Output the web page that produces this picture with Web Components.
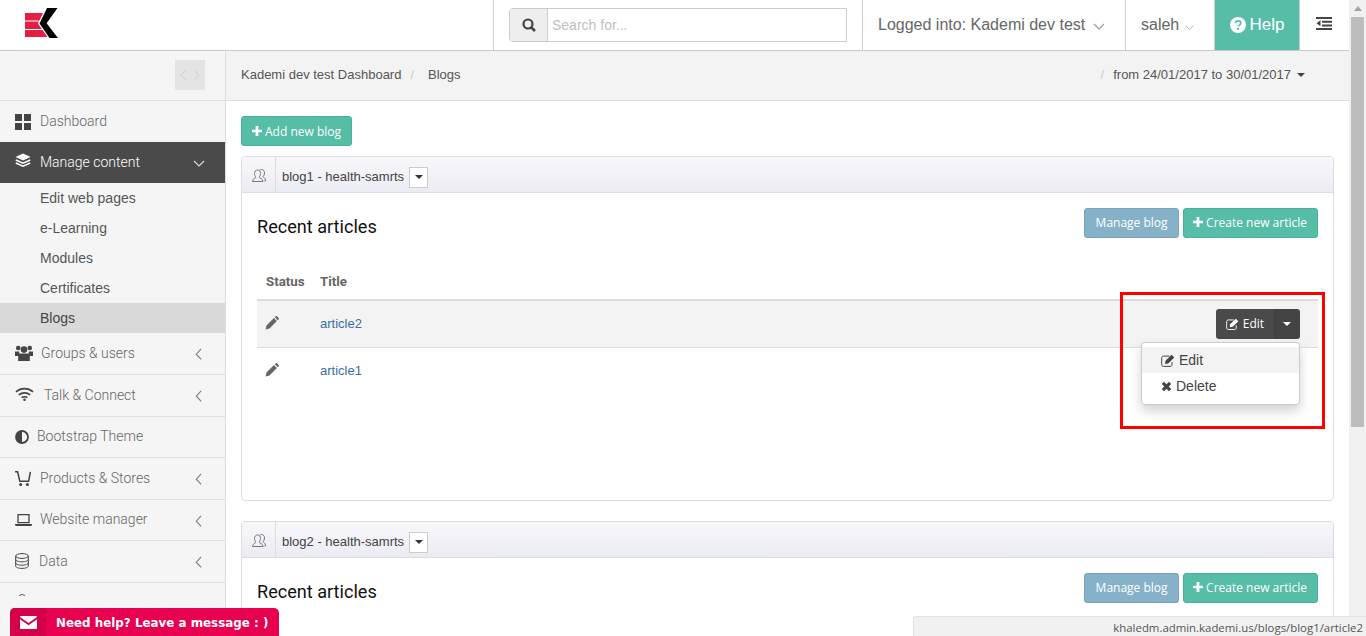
<!DOCTYPE html>
<html lang="en">
<head>
<meta charset="utf-8">
<title>Blogs</title>
<style>
  html, body { margin: 0; height: 100%; overflow: hidden; background: #fff; }
  body { font: 14px "Liberation Sans", Arial, sans-serif; color: #555; }
</style>
</head>
<body>
<kd-app>
  <kd-topbar slot="top"></kd-topbar>
  <kd-sidebar slot="side">
    <kd-nav-item icon="dashboard" gap="9">Dashboard</kd-nav-item>
    <kd-nav-item icon="layers" gap="9" lift="3" active chevron="down">Manage content</kd-nav-item>
    <kd-sub-item>Edit web pages</kd-sub-item>
    <kd-sub-item>e-Learning</kd-sub-item>
    <kd-sub-item>Modules</kd-sub-item>
    <kd-sub-item>Certificates</kd-sub-item>
    <kd-sub-item current>Blogs</kd-sub-item>
    <kd-nav-item icon="group" gap="8" lift="1" chevron="left" h="42">Groups &amp; users</kd-nav-item>
    <kd-nav-item icon="wifi" gap="10" lift="2" chevron="left" h="42">Talk &amp; Connect</kd-nav-item>
    <kd-nav-item icon="adjust" gap="8" h="41">Bootstrap Theme</kd-nav-item>
    <kd-nav-item icon="cart" gap="9" chevron="left" h="42">Products &amp; Stores</kd-nav-item>
    <kd-nav-item icon="laptop" gap="8" chevron="left" h="41">Website manager</kd-nav-item>
    <kd-nav-item icon="database" gap="10" lift="1" chevron="left" h="42">Data</kd-nav-item>
    <kd-nav-stub></kd-nav-stub>
  </kd-sidebar>
  <kd-breadcrumb slot="main"></kd-breadcrumb>
  <kd-page slot="main">
    <kd-button color="green" icon="plus">Add new blog</kd-button>
    <kd-blog-panel name="blog1 - health-samrts" tall>
      <kd-article-table>
        <kd-article-row title-text="article2" highlight open></kd-article-row>
        <kd-article-row title-text="article1"></kd-article-row>
      </kd-article-table>
    </kd-blog-panel>
    <kd-blog-panel name="blog2 - health-samrts"></kd-blog-panel>
  </kd-page>
</kd-app>

<script>
const ICONS = {
  dashboard: [16, 16, 'M0 0h7v7H0zM9 0h7v7H9zM0 9h7v7H0zM9 9h7v7H9z'],
  layers: [16, 14, '<path d="M8 .6 15.6 4 8 7.4.4 4z" fill="currentColor"/><path d="M.8 7 8 10.2 15.2 7M.8 10 8 13.2 15.2 10" fill="none" stroke="currentColor" stroke-width="1.5"/>'],
  group: [18, 16, '<circle cx="3.2" cy="3" r="2.3"/><circle cx="14.8" cy="3" r="2.3"/><circle cx="9" cy="4.6" r="3.3"/><path d="M0 6.4h4.3L4 11H0zM13.7 6.4H18V11h-4zM4.8 8.6h8.4c.9 0 1.6.8 1.6 1.8V16H3.2v-5.600c0-1 .7-1.800 1.600-1.800z"/>'],
  wifi: [19, 14, '<path d="M1 4.800C5.800.6 13.200.6 18 4.800M3.800 7.800c3.200-2.700 8.200-2.700 11.400 0M6.600 10.600c1.500-1.100 4.300-1.100 5.800 0" fill="none" stroke="currentColor" stroke-width="1.700"/><circle cx="9.500" cy="12.700" r="1.300" fill="currentColor"/>'],
  adjust: [14, 14, '<circle cx="7" cy="7" r="6" fill="none" stroke="currentColor" stroke-width="1.800"/><path d="M7 1a6 6 0 0 0 0 12z" fill="currentColor"/>'],
  cart: [16, 15, '<path d="M0 .8h2.600l2.200 9.400h8.800L15.400 1" fill="none" stroke="currentColor" stroke-width="1.500"/><circle cx="5.600" cy="13.400" r="1.500" fill="currentColor"/><circle cx="12.400" cy="13.400" r="1.500" fill="currentColor"/>'],
  laptop: [17, 12, '<path d="M3 .7h11v8H3z" fill="none" stroke="currentColor" stroke-width="1.300"/><path d="M0 10h17v1.200l-1 .8H1l-1-.8z" fill="currentColor"/>'],
  database: [14, 16, '<g fill="none" stroke="currentColor" stroke-width="1"><ellipse cx="7" cy="3" rx="6.300" ry="2.400"/><path d="M.7 3v10c0 1.400 2.800 2.400 6.300 2.400s6.300-1 6.300-2.400V3M.7 6.400c0 1.400 2.800 2.400 6.300 2.400s6.300-1 6.300-2.400M.7 9.800c0 1.400 2.800 2.400 6.300 2.400s6.300-1 6.300-2.400"/></g>'],
  search: [14, 14, '<circle cx="6" cy="6" r="4.500" fill="none" stroke="currentColor" stroke-width="2.200"/><path d="m9.300 9.300 3.700 3.700" stroke="currentColor" stroke-width="2.600"/>'],
  pencil: [14, 14, 'M.6 13.400l.9-3.900 7.400-7.400 3 3-7.400 7.400zM9.800 1.200 10.800.3c.4-.3.900-.3 1.200 0l1.700 1.700c.3.300.3.800 0 1.200l-1 1z'],
  edit: [14, 13, '<path d="M11 8v2.700c0 1-.7 1.700-1.700 1.700H2.400C1.400 12.400.7 11.700.7 10.700V3.800c0-1 .7-1.700 1.700-1.700h6" fill="none" stroke="currentColor" stroke-width="1"/><path d="M4.500 6.800 10.600 .7l2.700 2.700-6.100 6.100-3.200.5z" fill="currentColor"/>'],
  times: [11, 11, 'M3 .8 5.500 3.300 8 .8 10.200 3 7.700 5.500 10.200 8 8 10.200 5.500 7.700 3 10.200.8 8 3.300 5.500.8 3z'],
  plus: [11, 11, 'M4 0h3v4h4v3H7v4H4V7H0V4h4z'],
  users: [14, 13, '<g fill="none" stroke="currentColor" stroke-width="1"><path d="M5.500 1C7.500 1 8.500 2.600 8.500 4.500 8.500 6 7.800 7.400 7 8c0 1 4 1.500 4 4.500H.5C.5 9.500 4 9 4 8 3.200 7.400 2.500 6 2.500 4.500 2.500 2.600 3.500 1 5.500 1z"/><path d="M7.500 1.200C8.200.7 9 .5 9.500.5c2 0 3 1.600 3 3.500 0 1.500-.7 2.900-1.500 3.500 0 1 2.500 1 2.500 4.500h-1"/></g>'],
  envelope: [17, 13, 'M1.200 0h14.600c.7 0 1.200.5 1.200 1.100L8.500 7 0 1.100C0 .5.500 0 1.200 0zM0 3.300 8.500 9.200 17 3.300v8.400c0 .7-.5 1.300-1.200 1.300H1.200C.5 13 0 12.400 0 11.700z'],
  indent: [16, 13, 'M0 0h16v2H0zM6 3.700h10v2H6zM6 7.400h10v2H6zM0 11h16v2H0zM4.500 3.200v6L.5 6.200z'],
  help: [16, 16, '<circle cx="8" cy="8" r="8" fill="currentColor"/><path d="M5.300 6.200c.2-1.500 1.300-2.300 2.800-2.300 1.600 0 2.700.9 2.700 2.200 0 1-.6 1.500-1.300 2-.6.400-.9.700-.9 1.400" fill="none" stroke="#56bda6" stroke-width="1.700"/><rect x="7" y="10.800" width="2" height="2" fill="#56bda6"/>'],
  'chev-left': [8, 14, '<path d="M7 1 1.500 7 7 13" fill="none" stroke="currentColor" stroke-width="1.200"/>'],
  'chev-right': [8, 14, '<path d="M1 1l5.500 6L1 13" fill="none" stroke="currentColor" stroke-width="1.200"/>'],
  'chev-down': [12, 7, '<path d="M1 1l5 5 5-5" fill="none" stroke="currentColor" stroke-width="1.100"/>'],
  caret: [8, 4, 'M0 0h8L4 4z']
};

class KdIcon extends HTMLElement {
  connectedCallback() {
    const [w, h, body] = ICONS[this.getAttribute('name')];
    const size = this.getAttribute('size');
    const inner = body.startsWith('<') ? body : `<path d="${body}"/>`;
    const scale = size ? size / w : 1;
    this.attachShadow({mode: 'open'}).innerHTML = `
      <style>:host { display: inline-flex; flex: none; line-height: 0; } svg { display: block; fill: currentColor; }</style>
      <svg width="${w * scale}" height="${h * scale}" viewBox="0 0 ${w} ${h}">${inner}</svg>`;
  }
}

class KdApp extends HTMLElement {
  constructor() {
    super();
    this.attachShadow({mode: 'open'}).innerHTML = `
      <style>
        :host { display: grid; grid-template-columns: 1349px 17px; height: 636px; position: relative; overflow: hidden; }
        .shell { display: flex; flex-direction: column; min-width: 0; height: 636px; }
        .below { display: flex; flex: 1; min-height: 0; }
        .main { flex: 1; min-width: 0; display: flex; flex-direction: column; overflow: hidden; }
        .bar { background: #f1f1f1; display: flex; flex-direction: column; align-items: stretch; }
        .arrow { height: 17px; display: flex; align-items: center; justify-content: center; color: #a3a3a3; }
        .arrow i { border: 4px solid transparent; border-top: 0; border-bottom: 5px solid currentColor; }
        .thumb { height: 410px; background: #bdbdbd; margin: 0 2px 0 2px; }
        .annot { position: absolute; left: 1120px; top: 292px; width: 199px; height: 131px; border: 3px solid #f00; pointer-events: none; z-index: 5; }
        .status { position: absolute; right: 0; bottom: 0; width: 449px; height: 19px; padding-right: 3px; background: #f1f1f1; border-top: 1px solid #e2e2e2; border-left: 1px solid #e2e2e2; border-top-left-radius: 3px; font: 11.400px/21px "Open Sans", sans-serif; color: #555; text-align: right; z-index: 6; }
        .chat { position: absolute; left: 10px; bottom: 0; width: 269px; height: 28px; display: flex; background: #e6004f; border-radius: 5px 5px 0 0; overflow: hidden; color: #fff; z-index: 6; font: bold 11.900px/30px "DejaVu Sans", sans-serif; }
        .chat .env { width: 36px; background: #d4004a; display: flex; align-items: center; justify-content: center; }
        .chat span { margin-left: 10px; white-space: nowrap; }
      </style>
      <div class="shell">
        <slot name="top"></slot>
        <div class="below">
          <slot name="side"></slot>
          <div class="main"><slot name="main"></slot></div>
        </div>
      </div>
      <div class="bar"><div class="arrow"><i></i></div><div class="thumb"></div></div>
      <div class="annot"></div>
      <div class="status">khaledm.admin.kademi.us/blogs/blog1/article2</div>
      <div class="chat"><div class="env"><kd-icon name="envelope"></kd-icon></div><span>Need help? Leave a message : )</span></div>`;
  }
}

class KdTopbar extends HTMLElement {
  constructor() {
    super();
    this.attachShadow({mode: 'open'}).innerHTML = `
      <style>
        :host { display: flex; height: 50px; border-bottom: 1px solid #c9c9d1; background: #fff; font-size: 16px; color: #666; flex: none; }
        .cell { display: flex; flex: none; align-items: center; border-right: 1px solid #ccc; box-sizing: border-box; height: 50px; }
        .logo { width: 494px; padding-left: 25px; }
        .logo svg { margin-top: -3px; }
        .search { width: 369px; padding-left: 15px; }
        .group { display: flex; width: 338px; height: 34px; box-sizing: border-box; border: 1px solid #ccc; border-radius: 4px 0 0 4px; }
        .addon { width: 37px; background: #eee; border-right: 1px solid #ccc; display: flex; align-items: center; justify-content: center; color: #444; border-radius: 3px 0 0 3px; }
        .ph { padding-left: 4px; font-size: 14px; line-height: 32px; color: #c0c0c0; }
        .logged { width: 263px; padding-left: 15px; }
        .user { width: 89px; padding-left: 15px; }
        .help { width: 84px; justify-content: center; gap: 4px; background: #56bda6; color: #fff; font-size: 17px; border-right: 0; }
        .menu { width: 50px; justify-content: flex-end; padding-right: 17px; border: 0; color: #444; border-left: 1px solid #ccc; }
        .menu kd-icon { margin-top: -4px; }
        .chev { margin-left: 8px; color: #999; }
        .user .chev { margin-left: 6px; color: #aaa; }
      </style>
      <div class="cell logo">
        <svg width="34" height="31" viewBox="0 0 34 31">
          <path fill="#e21f45" d="M0 5h18l-3.500 7.500H0zM0 13.500h14l-1 2 3.800 5.500H0zM0 22h17.500l5 7H0z"/>
          <path fill="#000" d="M22 0h10.500L21.600 15.200 33 30h-8.500L14.500 15.500z"/>
        </svg>
      </div>
      <div class="cell search">
        <div class="group"><div class="addon"><kd-icon name="search"></kd-icon></div><div class="ph">Search for...</div></div>
      </div>
      <div class="cell logged">Logged into: Kademi dev test<span class="chev"><kd-icon name="chev-down"></kd-icon></span></div>
      <div class="cell user">saleh<span class="chev"><kd-icon name="chev-down" size="9"></kd-icon></span></div>
      <div class="cell help"><kd-icon name="help"></kd-icon>Help</div>
      <div class="cell menu"><kd-icon name="indent"></kd-icon></div>`;
  }
}

class KdSidebar extends HTMLElement {
  constructor() {
    super();
    this.attachShadow({mode: 'open'}).innerHTML = `
      <style>
        :host { display: block; flex: none; width: 226px; box-sizing: border-box; background: #f5f5f5; border-right: 1px solid #dcdcdc; overflow: hidden; }
        .toggle { height: 50px; box-sizing: border-box; border-bottom: 1px solid #ddd; padding-bottom: 1px; display: flex; justify-content: flex-end; align-items: center; padding-right: 20px; }
        .box { width: 30px; height: 30px; background: #e4e4e4; display: flex; align-items: center; justify-content: center; gap: 8px; color: #c8c8c8; }
      </style>
      <div class="toggle"><div class="box"><kd-icon name="chev-left" size="6"></kd-icon><kd-icon name="chev-right" size="6"></kd-icon></div></div>
      <slot></slot>`;
  }
}

class KdNavItem extends HTMLElement {
  connectedCallback() {
    const gap = this.getAttribute('gap') || 9;
    const lift = this.getAttribute('lift') || 0;
    const h = this.getAttribute('h');
    const chevron = this.getAttribute('chevron');
    const chevIcon = chevron === 'down'
      ? '<kd-icon name="chev-down"></kd-icon>'
      : chevron === 'left' ? '<kd-icon name="chev-left" size="7"></kd-icon>' : '';
    this.attachShadow({mode: 'open'}).innerHTML = `
      <style>
        :host { display: flex; align-items: center; box-sizing: border-box; height: ${h || 41}px; padding: 0 20px 2px 15px; font: 300 14px Roboto, sans-serif; color: #666; white-space: nowrap; ${h ? 'border-bottom: 1px solid #ddd;' : ''} }
        :host([active]) { background: #4a4a4a; color: #fff; }
        .ico { color: #444; display: flex; margin-top: ${2 - lift * 2}px; }
        :host([active]) .ico { color: #fff; }
        .label { margin-left: ${gap}px; flex: 1; }
        .chev { color: #778; display: flex; margin-right: 3px; margin-top: 4px; }
        :host([active]) .chev { color: #ddd; margin-right: 0; margin-top: 3px; }
      </style>
      <span class="ico"><kd-icon name="${this.getAttribute('icon')}"></kd-icon></span>
      <span class="label"><slot></slot></span>
      <span class="chev">${chevIcon}</span>`;
  }
}

class KdSubItem extends HTMLElement {
  constructor() {
    super();
    this.attachShadow({mode: 'open'}).innerHTML = `
      <style>
        :host { display: block; height: 30px; padding-left: 40px; font: 14px/30px "Liberation Sans", sans-serif; color: #555; }
        :host([current]) { background: #d9d9d9; color: #444; }
      </style>
      <slot></slot>`;
  }
}

// only the top of this row's icon is visible in the window
class KdNavStub extends HTMLElement {
  constructor() {
    super();
    this.attachShadow({mode: 'open'}).innerHTML = `
      <style>
        :host { display: block; height: 13px; padding: 11px 0 0 18px; box-sizing: border-box; overflow: hidden; }
        i { display: block; width: 6px; height: 6px; border: 1.500px solid #555; border-radius: 50%; }
      </style>
      <i></i>`;
  }
}

class KdBreadcrumb extends HTMLElement {
  constructor() {
    super();
    this.attachShadow({mode: 'open'}).innerHTML = `
      <style>
        :host { display: flex; align-items: center; flex: none; height: 50px; box-sizing: border-box; padding: 0 44px 2px 15px; background: #f3f3f3; border-bottom: 1px solid #ddd; font-size: 13px; color: #555; }
        .sep { color: #ccc; margin: 0 14px 0 9px; }
        .range { margin-left: auto; display: flex; align-items: center; }
        .range .sep { margin: 0 9px 0 0; }
        .range kd-icon { margin-left: 6px; color: #444; }
      </style>
      <span>Kademi dev test Dashboard</span><span class="sep">/</span><span>Blogs</span>
      <div class="range"><span class="sep">/</span>from 24/01/2017 to 30/01/2017<kd-icon name="caret"></kd-icon></div>`;
  }
}

class KdPage extends HTMLElement {
  constructor() {
    super();
    this.attachShadow({mode: 'open'}).innerHTML = `
      <style>
        :host { display: flex; flex-direction: column; align-items: stretch; flex: none; padding: 15px 15px 0; gap: 10px; }
        ::slotted(kd-button) { align-self: flex-start; }
      </style>
      <slot></slot>`;
  }
}

class KdButton extends HTMLElement {
  connectedCallback() {
    const icon = this.getAttribute('icon');
    this.attachShadow({mode: 'open'}).innerHTML = `
      <style>
        :host { display: inline-flex; align-items: center; gap: 3px; height: 30px; box-sizing: border-box; padding: 0 10px; border: 1px solid; border-radius: 3px; color: #fff; font: 12px "Open Sans", sans-serif; white-space: nowrap; }
        :host([color=green]) { background: #56bda6; border-color: #4caf99; }
        :host([color=blue]) { background: #85b2c9; border-color: #77a4bb; padding: 0 10.500px; }
      </style>
      ${icon ? `<kd-icon name="${icon}" size="10"></kd-icon>` : ''}<slot></slot>`;
  }
}

class KdBlogPanel extends HTMLElement {
  connectedCallback() {
    this.attachShadow({mode: 'open'}).innerHTML = `
      <style>
        :host { display: block; border: 1px solid #ddd; border-radius: 4px; background: #fff; flex: none; margin-bottom: 10px; }
        .head { display: flex; align-items: stretch; height: 36px; box-sizing: border-box; border-bottom: 1px solid #ddd; border-radius: 3px 3px 0 0; background: linear-gradient(#f8f8fb, #ebebf3); font-size: 13px; color: #444; }
        .tag { width: 34px; border-right: 1px solid #ddd; display: flex; align-items: center; justify-content: center; color: #777; padding-top: 2px; box-sizing: border-box; }
        .name { display: flex; align-items: center; padding: 5px 0 0 6px; gap: 5px; }
        .name b { font-weight: 400; margin-top: -2px; }
        .drop { width: 19px; height: 21px; background: #fff; border: 1px solid #ccc; display: flex; align-items: center; justify-content: center; color: #333; box-sizing: border-box; }
        .body { padding: 15px; min-height: ${this.hasAttribute('tall') ? 277 : 60}px; }
        .title { display: flex; align-items: center; justify-content: space-between; height: 30px; }
        h2 { margin: 6px 0 0; font: 400 18.100px Roboto, sans-serif; color: #111; }
        .actions { display: flex; gap: 4px; }
        .actions kd-button { padding-bottom: 2px; }
        .actions .create { padding-left: 9px; }
      </style>
      <div class="head">
        <div class="tag"><kd-icon name="users"></kd-icon></div>
        <div class="name"><b>${this.getAttribute('name')}</b><span class="drop"><kd-icon name="caret"></kd-icon></span></div>
      </div>
      <div class="body">
        <div class="title">
          <h2>Recent articles</h2>
          <div class="actions"><kd-button color="blue">Manage blog</kd-button><kd-button class="create" color="green" icon="plus">Create new article</kd-button></div>
        </div>
        <slot></slot>
      </div>`;
  }
}

class KdArticleTable extends HTMLElement {
  constructor() {
    super();
    this.attachShadow({mode: 'open'}).innerHTML = `
      <style>
        :host { display: block; margin-top: 25px; }
        .head { display: grid; grid-template-columns: 54px 1fr; height: 36px; padding-left: 9px; border-bottom: 2px solid #ddd; font: bold 13.300px/37px Roboto, sans-serif; color: #666; }
      </style>
      <div class="head"><span>Status</span><span>Title</span></div>
      <slot></slot>`;
  }
}

class KdArticleRow extends HTMLElement {
  connectedCallback() {
    const open = this.hasAttribute('open');
    this.attachShadow({mode: 'open'}).innerHTML = `
      <style>
        :host { display: flex; align-items: center; height: 47px; box-sizing: border-box; border-bottom: 1px solid #ddd; padding: 0 18px 0 8px; position: relative; font-size: 13px; }
        :host(:last-child) { border-bottom: 0; padding-bottom: 2px; }
        :host([highlight]) { background: #f3f3f3; z-index: 1; }
        .status { width: 55px; color: #666; display: flex; margin-top: -2px; }
        a { color: #3a6ea5; text-decoration: none; margin-top: -1px; }
        .split { margin-left: auto; display: flex; height: 30px; color: #fff; position: relative; font: 12px/30px "Open Sans", sans-serif; }
        .split .main { width: 58px; background: #4a4a4a; border-radius: 3px 0 0 3px; display: flex; align-items: center; justify-content: center; gap: 4px; }
        .split .more { width: 26px; background: #444; border-radius: 0 3px 3px 0; display: flex; align-items: center; justify-content: center; }
        .menu { position: absolute; top: 33px; right: 0; width: 159px; height: 63px; box-sizing: border-box; padding: 4px 0; background: #fff; border: 1px solid #ccc; border-radius: 4px; box-shadow: 0 6px 12px rgba(0,0,0,.175); font: 14px/26px "Liberation Sans", sans-serif; color: #444; }
        .menu div { height: 26px; display: flex; align-items: center; padding-left: 19px; gap: 4px; }
        .menu .on { background: #f3f3f3; }
      </style>
      <span class="status"><kd-icon name="pencil"></kd-icon></span>
      <a href="#">${this.getAttribute('title-text')}</a>
      <div class="split">
        <div class="main"><kd-icon name="edit" size="13"></kd-icon>Edit</div>
        <div class="more"><kd-icon name="caret"></kd-icon></div>
        ${open ? `<div class="menu">
          <div class="on"><kd-icon name="edit" size="14"></kd-icon>Edit</div>
          <div><kd-icon name="times"></kd-icon>Delete</div>
        </div>` : ''}
      </div>`;
  }
}

customElements.define('kd-icon', KdIcon);
customElements.define('kd-app', KdApp);
customElements.define('kd-topbar', KdTopbar);
customElements.define('kd-sidebar', KdSidebar);
customElements.define('kd-nav-item', KdNavItem);
customElements.define('kd-sub-item', KdSubItem);
customElements.define('kd-nav-stub', KdNavStub);
customElements.define('kd-breadcrumb', KdBreadcrumb);
customElements.define('kd-page', KdPage);
customElements.define('kd-button', KdButton);
customElements.define('kd-blog-panel', KdBlogPanel);
customElements.define('kd-article-table', KdArticleTable);
customElements.define('kd-article-row', KdArticleRow);
</script>
</body>
</html>
